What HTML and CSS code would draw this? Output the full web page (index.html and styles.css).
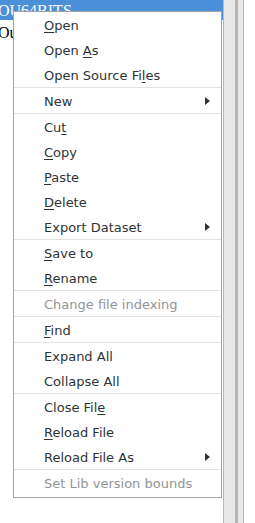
FILE: index.html
```html
<!DOCTYPE html>
<html lang="en">
<head>
    <meta charset="UTF-8">
    <meta name="viewport" content="width=device-width, initial-scale=1.0">
    <title>File Menu</title>
    <link rel="stylesheet" href="styles.css">
</head>
<body>
    <div class="window">
        <div class="tree">
            <div class="row selected">OU64BITS</div>
            <div class="row">Ou</div>
        </div>
        <div class="scrollbar"><div class="trough"></div></div>
    </div>

    <div class="menu">
        <div class="item"><span><u>O</u>pen</span></div>
        <div class="item"><span>Open <u>A</u>s</span></div>
        <div class="item"><span>Open Source Fi<u>l</u>es</span></div>
        <div class="sep"></div>
        <div class="item"><span>New</span><i class="arrow"></i></div>
        <div class="sep"></div>
        <div class="item"><span>Cu<u>t</u></span></div>
        <div class="item"><span><u>C</u>opy</span></div>
        <div class="item"><span><u>P</u>aste</span></div>
        <div class="item"><span><u>D</u>elete</span></div>
        <div class="item"><span>Export Dataset</span><i class="arrow"></i></div>
        <div class="sep"></div>
        <div class="item"><span><u>S</u>ave to</span></div>
        <div class="item"><span><u>R</u>ename</span></div>
        <div class="sep"></div>
        <div class="item disabled"><span>Change file indexing</span></div>
        <div class="sep"></div>
        <div class="item"><span><u>F</u>ind</span></div>
        <div class="sep"></div>
        <div class="item"><span>Expand All</span></div>
        <div class="item"><span>Collapse All</span></div>
        <div class="sep"></div>
        <div class="item"><span>Close Fil<u>e</u></span></div>
        <div class="item"><span><u>R</u>eload File</span></div>
        <div class="item"><span>Reload File As</span><i class="arrow"></i></div>
        <div class="sep"></div>
        <div class="item disabled"><span>Set Lib version bounds</span></div>
    </div>
</body>
</html>
```

FILE: styles.css
```css
body {
    margin: 0;
    background-color: white;
}
.window {
    display: flex;
    height: 523px;
}
.tree {
    width: 223px;
    font-family: "Liberation Serif", serif;
    font-size: 16px;
}
.row {
    height: 20px;
    line-height: 20px;
    white-space: nowrap;
    overflow: hidden;
    text-indent: -2px;
    margin-top: 3px;
}
.row.selected {
    margin-top: 0;
    background-color: #4a90d9;
    color: white;
    line-height: 22px;
}
.scrollbar {
    border-left: 1px solid #b8b8b8;
    border-right: 1px solid #b8b8b8;
    background-color: #e8e8e8;
    display: flex;
    justify-content: flex-end;
    padding-right: 5px;
    width: 14px;
}
.trough {
    width: 3px;
    background-color: #b4b4b4;
}
.menu {
    position: absolute;
    left: 13px;
    top: 11px;
    width: 209px;
    box-sizing: border-box;
    background-color: white;
    border: 1px solid #a3a3a3;
    padding-bottom: 2px;
    font-family: "DejaVu Sans", sans-serif;
    font-size: 13px;
    color: #2e3436;
}
.item {
    height: 25px;
    box-sizing: border-box;
    padding: 1px 11px 0 30px;
    display: flex;
    align-items: center;
    justify-content: space-between;
    white-space: nowrap;
}
.item u {
    text-decoration-thickness: 1px;
    text-underline-offset: 2px;
}
.item.disabled {
    color: #929595;
}
.sep {
    height: 1px;
    background-color: #e2e2e2;
}
.arrow {
    width: 0;
    height: 0;
    border-top: 4px solid transparent;
    border-bottom: 4px solid transparent;
    border-left: 5px solid #2e3436;
}
```
